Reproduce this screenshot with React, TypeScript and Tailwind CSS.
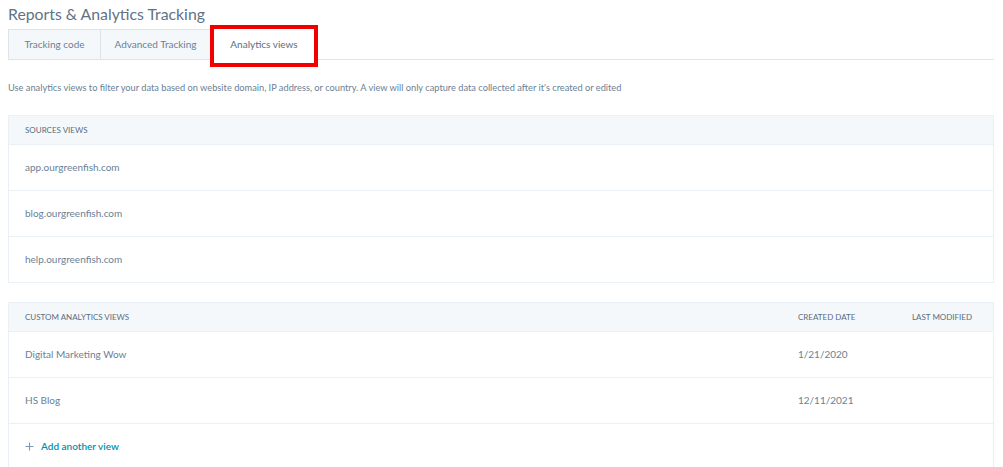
import React from "react";

const font = { fontFamily: "Lato, 'Noto Sans', sans-serif" };

function Row({ children, right }: { children: React.ReactNode; right?: React.ReactNode }) {
  return (
    <div className="flex h-[46px] items-center border-t border-[#eaf0f6] pl-4 text-[10px] text-[#6b7f94]">
      <div className="flex-1">{children}</div>
      {right}
    </div>
  );
}

export default function App() {
  return (
    <div className="h-[467px] w-[1003px] overflow-hidden bg-white pl-2" style={font}>
      <div className="w-[986px]">
        <h1 className="pt-[3px] text-[15.8px] leading-[22px] text-[#5f7386]">Reports &amp; Analytics Tracking</h1>
        <div className="mt-[4px] flex h-[31px] border-b border-[#dfe3eb]">
          <div className="flex w-[93px] items-center justify-center border border-b-0 border-[#dfe3eb] bg-[#f5f8fa] text-[10px] text-[#6b7f94]">
            Tracking code
          </div>
          <div className="flex w-[110px] items-center justify-center border-t border-r border-[#dfe3eb] bg-[#f5f8fa] text-[10px] text-[#6b7f94]">
            Advanced Tracking
          </div>
          <div className="relative -mb-px flex w-[106px] items-center justify-center bg-white text-[10px] text-[#5a6d80]">
            Analytics views
            <div className="pointer-events-none absolute -top-[4px] -bottom-[7px] -left-[1px] -right-[1px] border-[4px] border-[#f20000]" />
          </div>
        </div>
        <p className="mt-[22px] text-[9.25px] leading-[12px] text-[#6b7f94]">
          Use analytics views to filter your data based on website domain, IP address, or country. A view will only capture data collected after it's created or edited
        </p>
        <div className="mt-[21px] border-x border-b border-[#eaf0f6]">
          <div className="flex h-[29px] items-center border-t border-[#eaf0f6] bg-[#f5f8fa] px-4 text-[8px] text-[#5a6d80]">SOURCES VIEWS</div>
          <Row>app.ourgreenfish.com</Row>
          <Row>blog.ourgreenfish.com</Row>
          <Row>help.ourgreenfish.com</Row>
        </div>
        <div className="mt-[19px] border-x border-[#eaf0f6]">
          <div className="flex h-[29px] items-center border-t border-[#eaf0f6] bg-[#f5f8fa] pl-4 text-[8px] text-[#5a6d80]">
            <div className="flex-1">CUSTOM ANALYTICS VIEWS</div>
            <div className="w-[114px]">CREATED DATE</div>
            <div className="w-[81px]">LAST MODIFIED</div>
          </div>
          <Row right={<><div className="w-[114px]">1/21/2020</div><div className="w-[81px]" /></>}>Digital Marketing Wow</Row>
          <Row right={<><div className="w-[114px]">12/11/2021</div><div className="w-[81px]" /></>}>HS Blog</Row>
          <div className="flex h-[46px] items-center gap-[7px] border-t border-[#eaf0f6] px-4 text-[10px] font-semibold text-[#0091ae]">
            <svg width="9" height="9" viewBox="0 0 9 9" className="text-[#7c98b6]">
              <path d="M4.5 0.5v8M0.5 4.5h8" stroke="currentColor" strokeWidth="1.1" />
            </svg>
            Add another view
          </div>
        </div>
      </div>
    </div>
  );
}
